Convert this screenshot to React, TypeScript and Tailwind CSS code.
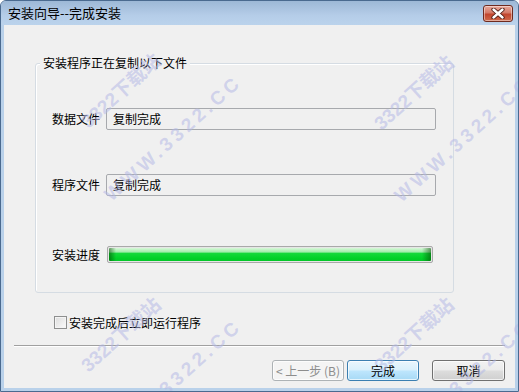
import { ReactNode } from "react";

const cjk = "font-['Noto_Sans_CJK_SC','Noto_Sans',sans-serif]";

// watermark tile origins (centre of each text line)
const MARKS = [
  { a: "left-[120px] top-[90px]", b: "left-[172px] top-[137px]" },
  { a: "left-[413px] top-[92px]", b: "left-[462px] top-[138px]" },
  { a: "left-[120px] top-[334px]", b: "left-[172px] top-[381px]" },
  { a: "left-[413px] top-[334px]", b: "left-[462px] top-[381px]" },
];

function Field({ label, value }: { label: string; value: string }) {
  return (
    <div className="flex h-[22px] items-center pl-[16px]">
      <span className="w-[48px] text-[12px] leading-none text-black">{label}</span>
      <div className="ml-[6px] flex h-[22px] w-[330px] items-center rounded-[2px] border border-[#a7a9ad] bg-[#f0f0f0] pl-[6px] text-[12px] leading-none text-black">
        {value}
      </div>
    </div>
  );
}

function Button({
  children,
  kind = "normal",
  className = "",
}: {
  children: ReactNode;
  kind?: "normal" | "default" | "disabled";
  className?: string;
}) {
  const look =
    kind === "default"
      ? "border-[#3c7fb1] bg-[linear-gradient(to_bottom,#eaf6fd_0%,#d9f0fc_48%,#bee6fd_52%,#a7d9f5_100%)] text-black"
      : kind === "disabled"
        ? "border-[#adb2b5] bg-[#f4f4f4] text-[#8d8d8d]"
        : "border-[#707070] bg-[linear-gradient(to_bottom,#f2f2f2_0%,#ebebeb_48%,#dddddd_52%,#cfcfcf_100%)] text-black";
  return (
    <button
      className={`flex h-[21px] w-[72px] items-center justify-center rounded-[3px] border text-[12px] leading-none shadow-[inset_0_0_0_1px_rgba(255,255,255,0.7)] ${look} ${className}`}
    >
      {children}
    </button>
  );
}

export default function App() {
  return (
    <div
      className={`relative flex h-[392px] w-[519px] flex-col overflow-hidden rounded-t-[6px] border border-[#4a6a8f] bg-[#b9d1ea] ${cjk}`}
    >
      {/* title bar */}
      <div className="flex h-[24px] shrink-0 items-start justify-between bg-[linear-gradient(to_bottom,#9db8d6,#b5cde8_60%,#bbd3ec)] pl-[7px] pr-[5px]">
        <span className="mt-[4px] text-[13px] leading-[15px] text-black">安装向导--完成安装</span>
        <button className="mt-[4px] flex h-[17px] w-[30px] items-center justify-center rounded-[3px] border border-[#6e2a1f] bg-[linear-gradient(to_bottom,#e9a99b_0%,#d47a68_45%,#c2452d_55%,#cf6a4c_100%)] shadow-[inset_0_0_0_1px_rgba(255,255,255,0.45)]">
          <svg width="14" height="11" viewBox="0 0 14 11">
            <path d="M2.5 1.5 L11.5 9.5 M11.5 1.5 L2.5 9.5" stroke="#4a1a12" strokeWidth="4.2" strokeLinecap="round" />
            <path d="M2.5 1.5 L11.5 9.5 M11.5 1.5 L2.5 9.5" stroke="#ffffff" strokeWidth="2.4" strokeLinecap="round" />
          </svg>
        </button>
      </div>

      {/* client area */}
      <div className="mx-[3px] mb-[3px] flex flex-1 flex-col bg-[#f0f0f0]">
        {/* group box */}
        <div className="relative ml-[31px] mt-[38px] flex h-[230px] w-[419px] flex-col rounded-[3px] border border-[#d5dce3] pt-[44px] shadow-[inset_1px_1px_0_#ffffff]">
          <span className="absolute -top-[8px] left-[4px] bg-[#f0f0f0] px-[3px] text-[12px] leading-[14px] text-black">
            安装程序正在复制以下文件
          </span>
          <Field label="数据文件" value="复制完成" />
          <div className="mt-[44px]">
            <Field label="程序文件" value="复制完成" />
          </div>
          <div className="mt-[50px] flex h-[17px] items-center pl-[16px]">
            <span className="w-[48px] text-[12px] leading-none text-black">安装进度</span>
            <div className="ml-[7px] h-[17px] w-[326px] rounded-[2px] border border-[#a9a9a9] bg-[#e6e6e6] p-px">
              <div className="h-full w-full rounded-[1px] bg-[linear-gradient(to_right,rgba(0,70,0,0.55)_0px,rgba(0,70,0,0)_7px,rgba(0,70,0,0)_calc(100%-9px),rgba(0,70,0,0.55)_100%),linear-gradient(to_bottom,#d8f8d8_0%,#a2ecac_30%,#14d83a_42%,#00d127_80%,#04c62a_100%)]" />
            </div>
          </div>
        </div>

        {/* run after install */}
        <label className="ml-[50px] mt-[23px] flex h-[13px] items-center gap-[2px]">
          <span className="h-[13px] w-[13px] border border-[#8e8f8f] bg-[linear-gradient(135deg,#dcdcdc,#fbfbfb)] shadow-[inset_0_0_0_1px_#f4f4f4]" />
          <span className="text-[12px] leading-none text-black">安装完成后立即运行程序</span>
        </label>

        <div className="mx-[10px] mt-[16px] border-t border-b border-t-[#a0a0a0] border-b-white" />

        <div className="mr-[10px] mt-[13px] flex justify-end">
          <Button kind="disabled">&lt; 上一步 (B)</Button>
          <Button kind="default" className="ml-[3px]">
            完成
          </Button>
          <Button className="ml-[13px] w-[73px]">取消</Button>
        </div>
      </div>

      {/* watermark */}
      {MARKS.map((m, i) => (
        <div key={i} className="pointer-events-none">
          <span
            className={`absolute ${m.a} -translate-x-1/2 -translate-y-1/2 rotate-[-42deg] whitespace-nowrap text-[19px] font-bold leading-none text-[#b4b9e6]/55 font-['Liberation_Sans','Noto_Sans_CJK_SC',sans-serif]`}
          >
            3322下载站
          </span>
          <span
            className={`absolute ${m.b} -translate-x-1/2 -translate-y-1/2 rotate-[-42deg] whitespace-nowrap text-[19px] font-bold leading-none tracking-[4px] text-[#b4b9e6]/55 font-['Liberation_Sans',sans-serif]`}
          >
            WWW.3322.CC
          </span>
        </div>
      ))}
    </div>
  );
}
